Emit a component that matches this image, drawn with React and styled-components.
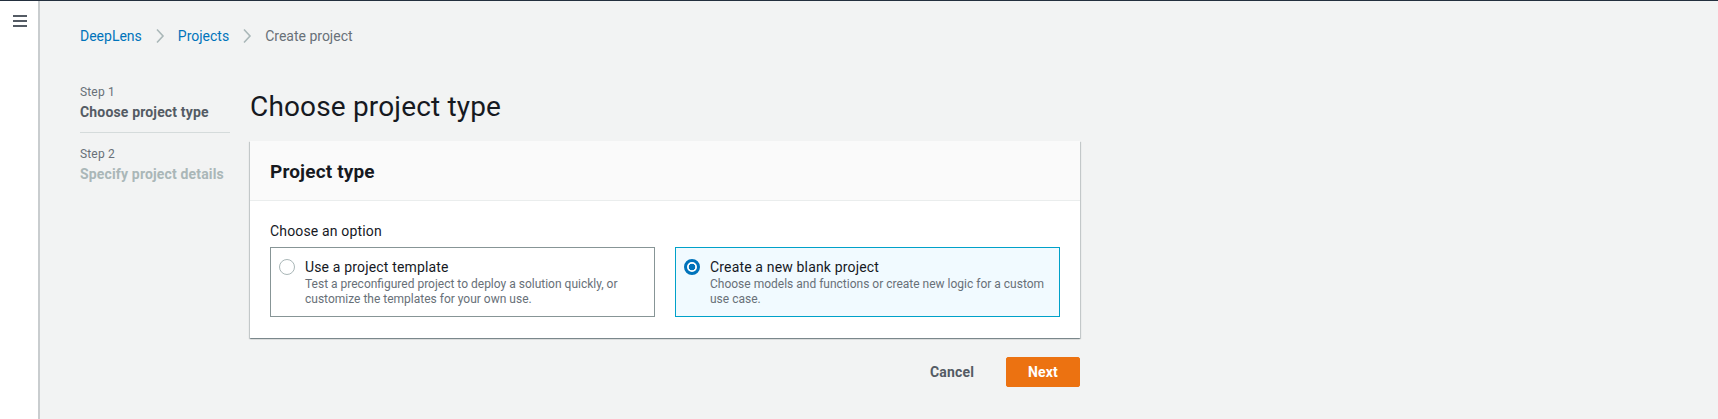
import React from 'react';
import styled, { createGlobalStyle } from 'styled-components';

const GlobalStyle = createGlobalStyle`
  html, body {
    margin: 0;
    padding: 0;
    background: #f2f3f3;
  }
  body {
    font-family: Roboto, "Liberation Sans", Arial, sans-serif;
    letter-spacing: 0.01em;
    color: #16191f;
    -webkit-font-smoothing: antialiased;
  }
  * {
    box-sizing: border-box;
  }
`;

const Page = styled.div`
  display: flex;
  min-height: 100vh;
  border-top: 1px solid #232f3e;
`;

const SideNav = styled.aside`
  width: 40px;
  flex-shrink: 0;
  background: #fff;
  border-right: 2px solid #c9cdcf;
  padding: 14px 0 0 13px;
`;

const Burger = styled.button`
  display: flex;
  flex-direction: column;
  gap: 3px;
  padding: 0;
  border: 0;
  background: none;
  cursor: pointer;
  span {
    display: block;
    width: 14px;
    height: 2px;
    background: #545b64;
  }
`;

const Content = styled.main`
  flex: 1;
  padding: 25px 40px 24px 40px;
`;

const Crumbs = styled.nav`
  display: flex;
  align-items: center;
  gap: 13px;
  font-size: 14px;
  line-height: 20px;
  letter-spacing: 0;
  margin-bottom: 38px;
  a {
    color: #0073bb;
    text-decoration: none;
  }
  .current {
    color: #687078;
  }
`;

const Chevron = () => (
  <svg width="10" height="16" viewBox="0 0 10 16" fill="none">
    <path d="M2 1.5 L8 8 L2 14.5" stroke="#aab7b8" strokeWidth="1.6" />
  </svg>
);

const Layout = styled.div`
  display: flex;
  gap: 20px;
  align-items: flex-start;
`;

const Steps = styled.ol`
  list-style: none;
  margin: 0;
  padding: 0;
  width: 150px;
  flex-shrink: 0;
`;

const Step = styled.li`
  padding: ${({ first }) => (first ? '0 0 10px' : '13px 0 0')};
  border-bottom: ${({ first }) => (first ? '1px solid #d5dbdb' : 'none')};
  .label {
    font-size: 12px;
    line-height: 16px;
    color: #687078;
  }
  .title {
    margin-top: 2px;
    font-size: 14px;
    line-height: 20px;
    font-weight: 700;
    color: ${({ active }) => (active ? '#545b64' : '#aab7b8')};
    white-space: nowrap;
  }
`;

const Main = styled.section`
  width: 830px;
`;

const Heading = styled.h1`
  margin: 5px 0 16px;
  font-size: 28px;
  line-height: 36px;
  font-weight: 400;
  color: #16191f;
`;

const Card = styled.div`
  background: #fff;
  box-shadow: 0 1px 1px 0 rgba(0, 28, 36, 0.3), 1px 1px 1px 0 rgba(0, 28, 36, 0.15),
    -1px 1px 1px 0 rgba(0, 28, 36, 0.15);
`;

const CardHeader = styled.div`
  background: #fafafa;
  border-bottom: 1px solid #eaeded;
  padding: 21px 20px 18px;
  h2 {
    margin: 0;
    font-size: 19px;
    line-height: 20px;
    font-weight: 700;
    color: #16191f;
  }
`;

const CardBody = styled.div`
  padding: 19px 20px 21px;
`;

const FieldLabel = styled.div`
  font-size: 14px;
  line-height: 22px;
  color: #16191f;
  margin-bottom: 5px;
`;

const Tiles = styled.div`
  display: grid;
  grid-template-columns: 1fr 1fr;
  gap: 20px;
`;

const Tile = styled.label`
  display: flex;
  gap: 10px;
  padding: 9px 8px;
  border: 1px solid ${({ selected }) => (selected ? '#00a1c9' : '#879596')};
  background: ${({ selected }) => (selected ? '#f1faff' : '#fff')};
  cursor: pointer;
`;

const Radio = styled.span`
  width: 16px;
  height: 16px;
  margin-top: 2px;
  flex-shrink: 0;
  border-radius: 50%;
  border: ${({ checked }) => (checked ? '3px solid #0073bb' : '1px solid #aab7b8')};
  background: ${({ checked }) =>
    checked ? 'radial-gradient(circle, #0073bb 0 3px, #fff 3.6px)' : '#fff'};
`;

const TileText = styled.div`
  .title {
    font-size: 14px;
    line-height: 20px;
    color: #16191f;
  }
  .desc {
    font-size: 12px;
    line-height: 15px;
    letter-spacing: 0;
    color: #687078;
  }
`;

const Actions = styled.div`
  display: flex;
  justify-content: flex-end;
  align-items: center;
  gap: 10px;
  margin-top: 19px;
`;

const Button = styled.button`
  height: 30px;
  padding: 0 21px;
  font-family: inherit;
  letter-spacing: inherit;
  font-size: 14px;
  font-weight: 700;
  border-radius: 2px;
  border: 1px solid ${({ primary }) => (primary ? '#ec7211' : 'transparent')};
  background: ${({ primary }) => (primary ? '#ec7211' : 'transparent')};
  color: ${({ primary }) => (primary ? '#fff' : '#545b64')};
  cursor: pointer;
`;

const options = [
  {
    id: 'template',
    title: 'Use a project template',
    desc: 'Test a preconfigured project to deploy a solution quickly, or customize the templates for your own use.',
  },
  {
    id: 'blank',
    title: 'Create a new blank project',
    desc: 'Choose models and functions or create new logic for a custom use case.',
  },
];

export default function App() {
  const [choice, setChoice] = React.useState('blank');
  return (
    <>
      <GlobalStyle />
      <Page>
        <SideNav>
          <Burger aria-label="Open navigation">
            <span />
            <span />
            <span />
          </Burger>
        </SideNav>
        <Content>
          <Crumbs>
            <a href="#">DeepLens</a>
            <Chevron />
            <a href="#">Projects</a>
            <Chevron />
            <span className="current">Create project</span>
          </Crumbs>
          <Layout>
            <Steps>
              <Step first active>
                <div className="label">Step 1</div>
                <div className="title">Choose project type</div>
              </Step>
              <Step>
                <div className="label">Step 2</div>
                <div className="title">Specify project details</div>
              </Step>
            </Steps>
            <Main>
              <Heading>Choose project type</Heading>
              <Card>
                <CardHeader>
                  <h2>Project type</h2>
                </CardHeader>
                <CardBody>
                  <FieldLabel>Choose an option</FieldLabel>
                  <Tiles>
                    {options.map((o) => (
                      <Tile
                        key={o.id}
                        selected={choice === o.id}
                        onClick={() => setChoice(o.id)}
                      >
                        <Radio checked={choice === o.id} />
                        <TileText>
                          <div className="title">{o.title}</div>
                          <div className="desc">{o.desc}</div>
                        </TileText>
                      </Tile>
                    ))}
                  </Tiles>
                </CardBody>
              </Card>
              <Actions>
                <Button>Cancel</Button>
                <Button primary>Next</Button>
              </Actions>
            </Main>
          </Layout>
        </Content>
      </Page>
    </>
  );
}
